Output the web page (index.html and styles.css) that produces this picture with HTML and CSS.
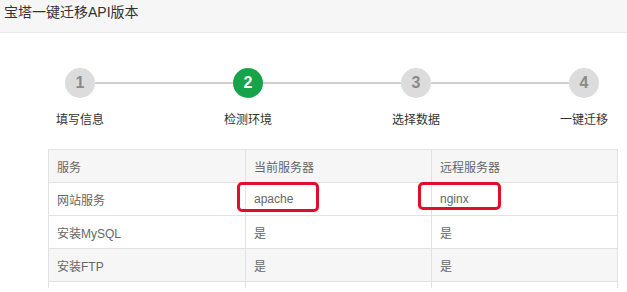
FILE: index.html
```html
<!DOCTYPE html>
<html lang="zh">
<head>
<meta charset="utf-8">
<title>宝塔一键迁移API版本</title>
<link rel="stylesheet" href="styles.css">
</head>
<body>
<div class="header">宝塔一键迁移API版本</div>
<div class="steps">
  <div class="track">
    <span class="dot">1</span><span class="line"></span>
    <span class="dot active">2</span><span class="line"></span>
    <span class="dot">3</span><span class="line"></span>
    <span class="dot">4</span>
  </div>
  <div class="labels">
    <span>填写信息</span><span>检测环境</span><span>选择数据</span><span>一键迁移</span>
  </div>
</div>
<div class="tablewrap">
  <table class="tbl">
    <colgroup><col class="c1"><col class="c2"><col class="c3"></colgroup>
    <tr class="grey"><td>服务</td><td>当前服务器</td><td>远程服务器</td></tr>
    <tr><td>网站服务</td><td>apache</td><td>nginx</td></tr>
    <tr><td>安装MySQL</td><td>是</td><td>是</td></tr>
    <tr class="grey"><td>安装FTP</td><td>是</td><td>是</td></tr>
    <tr class="cut"><td></td><td></td><td></td></tr>
  </table>
  <div class="mark mark-a"></div>
  <div class="mark mark-b"></div>
</div>
</body>
</html>
```
FILE: styles.css
```css
html, body { margin: 0; padding: 0; background: #fff; overflow: hidden; }
body {
  font-family: "Liberation Sans", "Noto Sans CJK SC", sans-serif;
  color: #333;
  width: 627px;
  height: 292px;
}
.header {
  height: 29px;
  padding: 3px 0 0 4px;
  line-height: 18px;
  font-size: 14px;
  color: #333;
  background: #f6f6f6;
  border-bottom: 1px solid #e6e6e6;
}
.steps { margin-top: 35px; }
.track {
  display: flex;
  align-items: center;
  padding-left: 65px;
}
.dot {
  width: 30px;
  height: 30px;
  border-radius: 50%;
  background: #dcdcdc;
  color: #8a8a8a;
  font-size: 16px;
  font-weight: bold;
  line-height: 30px;
  text-align: center;
  flex: none;
}
.dot.active { background: #16a34a; color: #fff; }
.line { width: 138px; height: 2px; background: #cfcfcf; flex: none; }
.labels {
  display: grid;
  grid-template-columns: repeat(4, 80px);
  column-gap: 88px;
  padding-left: 40px;
  margin-top: 14px;
  font-size: 12px;
  line-height: 17px;
  color: #333;
  text-align: center;
}
.tablewrap {
  position: relative;
  margin: 20px 0 0 48px;
  width: 570px;
}
.tbl {
  border-collapse: collapse;
  width: 570px;
  table-layout: fixed;
  font-size: 12px;
  color: #666;
}
.c1 { width: 197px; }
.c2 { width: 186px; }
.c3 { width: 186px; }
.tbl td {
  border: 1px solid #e2e2e2;
  height: 33px;
  padding: 0 8px;
  box-sizing: border-box;
  vertical-align: middle;
}
.tbl tr.grey td { background: #f6f6f6; }
.tbl tr.cut td { height: 6px; border-bottom: none; padding: 0; }
.mark {
  position: absolute;
  border: 3px solid #e20c2c;
  border-radius: 5px;
  box-sizing: border-box;
}
.mark-a { left: 189px; top: 33px; width: 82px; height: 30px; }
.mark-b { left: 370px; top: 33px; width: 83px; height: 28px; }
```
